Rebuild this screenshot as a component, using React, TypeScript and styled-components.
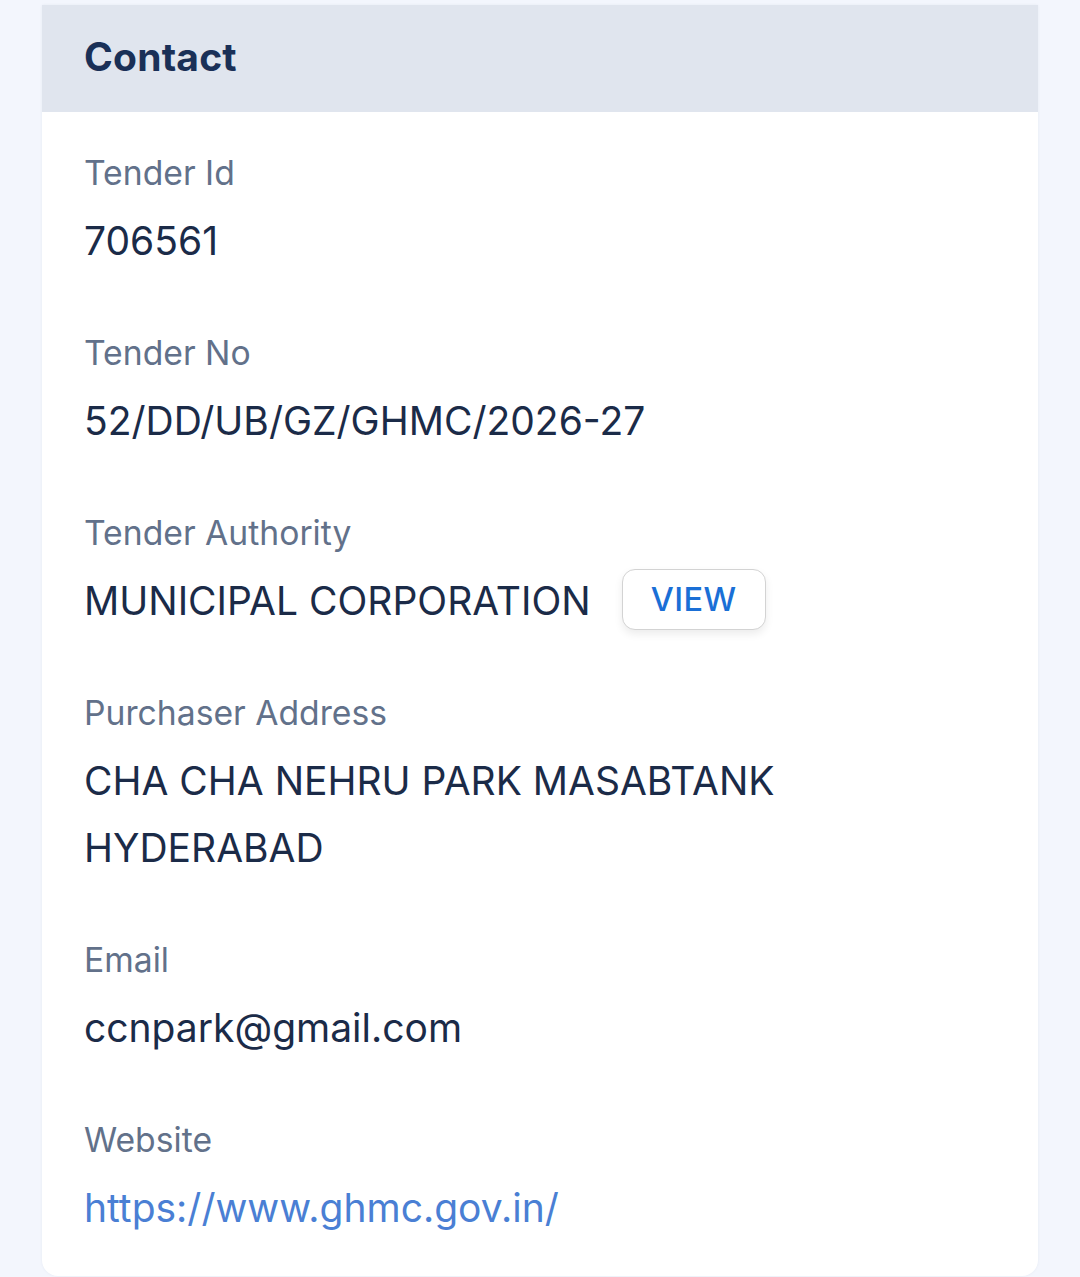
import React from "react";
import styled, { createGlobalStyle } from "styled-components";

const Global = createGlobalStyle`
  html, body { margin: 0; padding: 0; background: #f3f6fd; }
  body { font-family: Inter, "Noto Sans", sans-serif; -webkit-font-smoothing: antialiased; }
`;

const Page = styled.div`
  padding: 5px 42px 0;
  min-height: 1277px;
  box-sizing: border-box;
`;

const Card = styled.section`
  background: #ffffff;
  border-radius: 0 0 16px 16px;
  box-shadow: 0 0 3px rgba(30, 50, 90, 0.06);
  overflow: hidden;
`;

const Header = styled.header`
  height: 107px;
  box-sizing: border-box;
  background: #e0e5ee;
  display: flex;
  align-items: center;
  padding: 0 42px 4px;
`;

const Title = styled.h2`
  margin: 0;
  font-size: 39px;
  font-weight: 700;
  color: #1a3057;
  letter-spacing: 0.2px;
`;

const Body = styled.div`
  display: flex;
  flex-direction: column;
  gap: 53px;
  padding: 35px 42px 35px;
`;

const Field = styled.div`
  display: flex;
  flex-direction: column;
  gap: 9px;
`;

const Label = styled.div`
  font-size: 33.7px;
  line-height: 51px;
  color: #62718a;
`;

const Value = styled.div<{ $link?: boolean }>`
  font-size: 39px;
  line-height: 67px;
  color: ${(p) => (p.$link ? "#4a7fd4" : "#1b2b48")};
`;

const Row = styled.div`
  display: flex;
  align-items: center;
  gap: 31px;
`;

const ViewButton = styled.button`
  width: 144px;
  height: 61px;
  border: 1.5px solid #d3d3d3;
  border-radius: 13px;
  background: #ffffff;
  box-shadow: 0 4px 8px rgba(0, 0, 0, 0.08);
  color: #1a6fd6;
  font-family: Inter, "Noto Sans", sans-serif;
  font-size: 32.5px;
  font-weight: 500;
  letter-spacing: 0.4px;
  padding: 0;
  margin-top: -3px;
`;

export default function App() {
  return (
    <>
      <Global />
      <Page>
        <Card>
          <Header>
            <Title>Contact</Title>
          </Header>
          <Body>
            <Field>
              <Label>Tender Id</Label>
              <Value>706561</Value>
            </Field>
            <Field>
              <Label>Tender No</Label>
              <Value>52/DD/UB/GZ/GHMC/2026-27</Value>
            </Field>
            <Field>
              <Label>Tender Authority</Label>
              <Row>
                <Value>MUNICIPAL CORPORATION</Value>
                <ViewButton>VIEW</ViewButton>
              </Row>
            </Field>
            <Field>
              <Label>Purchaser Address</Label>
              <Value>
                CHA CHA NEHRU PARK MASABTANK
                <br />
                HYDERABAD
              </Value>
            </Field>
            <Field>
              <Label>Email</Label>
              <Value>ccnpark@gmail.com</Value>
            </Field>
            <Field>
              <Label>Website</Label>
              <Value $link>https://www.ghmc.gov.in/</Value>
            </Field>
          </Body>
        </Card>
      </Page>
    </>
  );
}
